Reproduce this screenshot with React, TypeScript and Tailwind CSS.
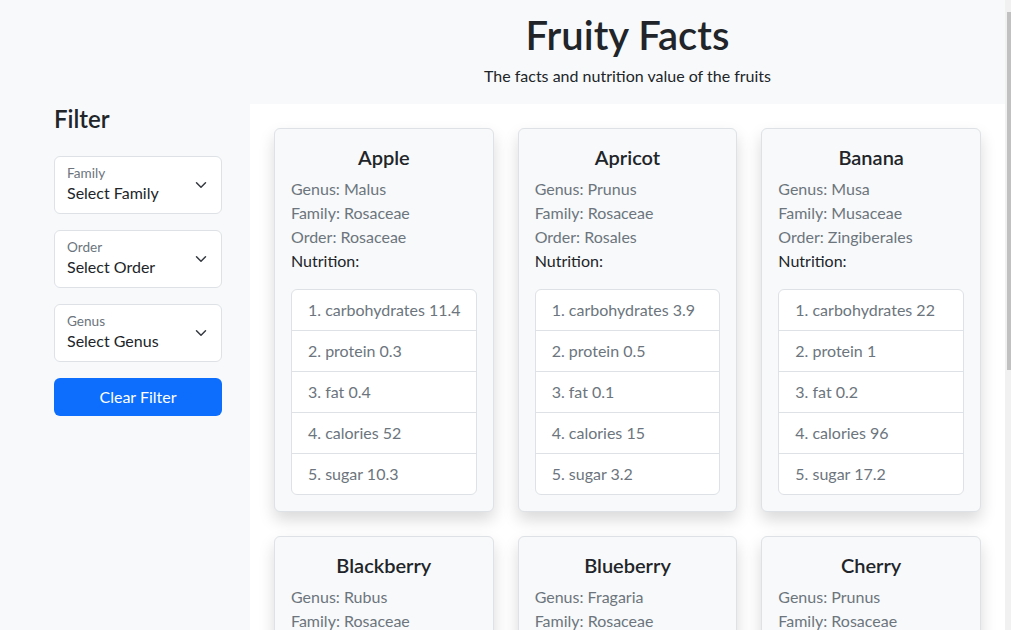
import React from 'react'

type Fruit = {
  name: string
  genus: string
  family: string
  order: string
  nutritions: { carbohydrates: number; protein: number; fat: number; calories: number; sugar: number }
}

const FRUITS: Fruit[] = [
  { name: 'Apple', genus: 'Malus', family: 'Rosaceae', order: 'Rosaceae', nutritions: { carbohydrates: 11.4, protein: 0.3, fat: 0.4, calories: 52, sugar: 10.3 } },
  { name: 'Apricot', genus: 'Prunus', family: 'Rosaceae', order: 'Rosales', nutritions: { carbohydrates: 3.9, protein: 0.5, fat: 0.1, calories: 15, sugar: 3.2 } },
  { name: 'Banana', genus: 'Musa', family: 'Musaceae', order: 'Zingiberales', nutritions: { carbohydrates: 22, protein: 1, fat: 0.2, calories: 96, sugar: 17.2 } },
  { name: 'Blackberry', genus: 'Rubus', family: 'Rosaceae', order: 'Rosales', nutritions: { carbohydrates: 9, protein: 1.3, fat: 0.4, calories: 40, sugar: 4.5 } },
  { name: 'Blueberry', genus: 'Fragaria', family: 'Rosaceae', order: 'Rosales', nutritions: { carbohydrates: 5.5, protein: 0, fat: 0.4, calories: 29, sugar: 5.4 } },
  { name: 'Cherry', genus: 'Prunus', family: 'Rosaceae', order: 'Rosaceae', nutritions: { carbohydrates: 12, protein: 1, fat: 0.3, calories: 50, sugar: 8 } },
]

const SELECTS = [
  { label: 'Family', value: 'Select Family' },
  { label: 'Order', value: 'Select Order' },
  { label: 'Genus', value: 'Select Genus' },
]

function FloatingSelect({ label, value }: { label: string; value: string }) {
  return (
    <div className="relative h-[58px] mb-4 rounded-[6px] border border-[#dee2e6] bg-white px-3 pt-[9px]">
      <div className="text-[13.6px] leading-[15px] text-[#6c757d]">{label}</div>
      <div className="text-base leading-6 text-[#212529]">{value}</div>
      <svg
        className="absolute right-3 top-1/2 -translate-y-1/2"
        width="16"
        height="12"
        viewBox="0 0 16 16"
        fill="none"
        aria-hidden="true"
      >
        <path d="m2 5 6 6 6-6" stroke="#343a40" strokeWidth="2" strokeLinecap="round" strokeLinejoin="round" />
      </svg>
    </div>
  )
}

function FruitCard({ fruit }: { fruit: Fruit }) {
  const n = fruit.nutritions
  const rows = [
    `carbohydrates ${n.carbohydrates}`,
    `protein ${n.protein}`,
    `fat ${n.fat}`,
    `calories ${n.calories}`,
    `sugar ${n.sugar}`,
  ]
  return (
    <div className="rounded-[6px] border border-[#dee2e6] bg-[#f8f9fa] p-4 shadow-[0_8px_16px_rgba(0,0,0,0.15)]">
      <h5 className="mb-2 text-center text-[20px] font-semibold leading-6 text-[#212529]">{fruit.name}</h5>
      <div className="text-[#6c757d] leading-6">
        <p>Genus: {fruit.genus}</p>
        <p>Family: {fruit.family}</p>
        <p>Order: {fruit.order}</p>
      </div>
      <p className="leading-6 text-[#212529]">Nutrition:</p>
      <ol className="mt-4 overflow-hidden rounded-[6px] border border-[#dee2e6] bg-white">
        {rows.map((r, i) => (
          <li key={r} className="border-t border-[#dee2e6] px-4 py-2 leading-6 whitespace-nowrap text-[#6c757d] first:border-t-0">
            {i + 1}. {r}
          </li>
        ))}
      </ol>
    </div>
  )
}

export default function App() {
  return (
    <div
      className="flex h-[630px] overflow-hidden bg-[#f8f9fa] text-base text-[#212529]"
      style={{ fontFamily: 'Lato, "Noto Sans", sans-serif' }}
    >
      {/* Sidebar filter */}
      <aside className="w-[250px] shrink-0 pl-[54px] pr-[28px] pt-[104px]">
        <h4 className="mb-[23px] text-[24px] font-semibold leading-[29px]">Filter</h4>
        {SELECTS.map((s) => (
          <FloatingSelect key={s.label} label={s.label} value={s.value} />
        ))}
        <button className="h-[38px] w-full rounded-[6px] bg-[#0d6efd] text-base text-white">
          Clear Filter
        </button>
      </aside>

      {/* Main */}
      <main className="min-w-0 flex-1">
        <header className="flex h-[104px] flex-col items-center pt-[11px]">
          <h1 className="text-[40px] font-semibold leading-[48px]">Fruity Facts</h1>
          <p className="mt-[5px] leading-6">The facts and nutrition value of the fruits</p>
        </header>
        <section className="grid grid-cols-3 gap-6 bg-white p-6">
          {FRUITS.map((f) => (
            <FruitCard key={f.name} fruit={f} />
          ))}
        </section>
      </main>

      {/* Scrollbar */}
      <div className="w-[6px] shrink-0 bg-[#f1f1f1] pt-[12px] pl-[2px]">
        <div className="h-[358px] bg-[#c1c1c1]" />
      </div>
    </div>
  )
}
